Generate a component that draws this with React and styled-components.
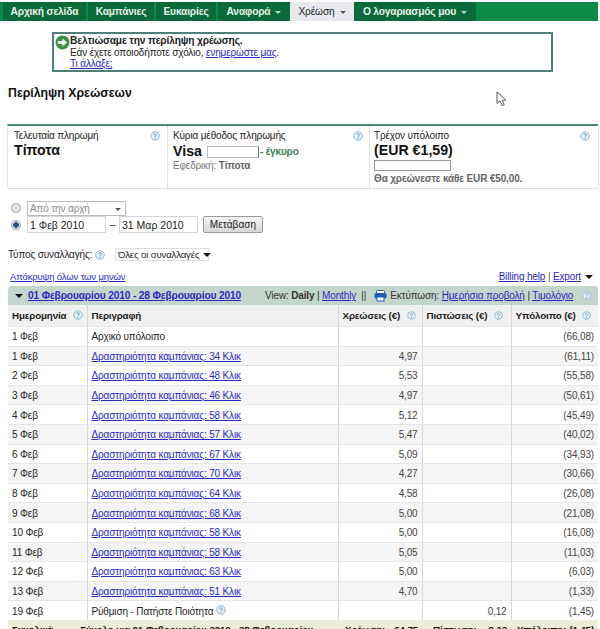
import React from 'react';
import styled, { createGlobalStyle } from 'styled-components';

const GlobalStyle = createGlobalStyle`
  html, body {
    margin: 0;
    height: 629px;
    overflow: hidden;
    background: #fff;
    font-family: "Liberation Sans", Arial, sans-serif;
    font-size: 10px;
    letter-spacing: -0.15px;
    color: #222;
  }
  a {
    color: #2a2ac0;
    text-decoration: underline;
  }
`;

const Page = styled.div`
  position: relative;
  width: 600px;
  height: 629px;
  overflow: hidden;
  padding-top: 2px;
  box-sizing: border-box;
`;

const Nav = styled.div`
  display: flex;
  height: 19px;
  width: 598px;
  background: #0b8b45;
  padding-left: 3px;
  box-sizing: border-box;
`;

const Tab = styled.div`
  width: ${({ $w }) => $w}px;
  margin-right: ${({ $gap }) => $gap ?? 2}px;
  display: flex;
  align-items: center;
  justify-content: center;
  gap: 5px;
  font-size: 10.2px;
  font-weight: ${({ $active }) => ($active ? 'normal' : 'bold')};
  background: ${({ $active }) => ($active ? '#e7e9ef' : '#0a6a39')};
  color: ${({ $active }) => ($active ? '#222' : '#e8f2ea')};
`;

const Caret = styled.span`
  width: 0;
  height: 0;
  margin-top: 2px;
  border-left: 3px solid transparent;
  border-right: 3px solid transparent;
  border-top: 3px solid ${({ $dark }) => ($dark ? '#555' : '#bcd8c6')};
`;

const Notice = styled.div`
  margin: 11px 0 0 52px;
  width: 501px;
  height: 40px;
  box-sizing: border-box;
  border: 2px solid #4f7f79;
  padding: 1px 0 0 1px;
  display: flex;
  line-height: 11.5px;
`;

const NoticeTitle = styled.div`
  font-weight: bold;
  font-size: 10.2px;
`;

const Heading = styled.h1`
  margin: 13px 0 0 8px;
  font-size: 12.3px;
  letter-spacing: 0;
  line-height: 16px;
  font-weight: bold;
  color: #111;
`;

const Summary = styled.div`
  display: grid;
  grid-template-columns: 160px 202px 229px;
  width: 591px;
  height: 65px;
  margin: 23px 0 0 7px;
  box-sizing: border-box;
  border-top: 2px solid #4f8a72;
  border-bottom: 1px solid #e2e2e2;
  border-left: 1px solid #e6e6e6;
`;

const SummaryCell = styled.div`
  position: relative;
  padding: 4px 0 0 ${({ $pad }) => $pad ?? 5}px;
  border-right: 1px solid #e2e2e2;
  line-height: 12px;
`;

const HelpCorner = styled.span`
  position: absolute;
  top: 5px;
  right: ${({ $right }) => $right ?? 7}px;
  display: flex;
`;

const BigValue = styled.div`
  font-size: 14.2px;
  letter-spacing: 0;
  font-weight: bold;
  color: #111;
  line-height: 15px;
  margin-top: 1px;
`;

const VisaRow = styled.div`
  display: flex;
  align-items: center;
  height: 15px;
  margin-top: 1px;
`;

const Masked = styled.span`
  width: 50px;
  height: 10px;
  margin: 3px 1px 0 5px;
  border: 1px solid #bbb;
  border-right-color: #777;
  background: #fff;
`;

const Valid = styled.span`
  color: #3d7f5c;
  font-weight: bold;
  margin-top: 3px;
`;

const Muted = styled.div`
  color: #777;
  margin-top: 2px;
  b {
    color: #666;
  }
`;

const BlankField = styled.div`
  width: 75px;
  height: 9px;
  border: 1px solid #999;
  margin-top: 2px;
`;

const FormRows = styled.div`
  margin: 11px 0 0 11px;
  display: flex;
  flex-direction: column;
`;

const FormRow = styled.div`
  display: flex;
  align-items: center;
  height: ${({ $h }) => $h}px;
`;

const Radio = styled.span`
  width: 8px;
  height: 8px;
  border-radius: 50%;
  border: 1px solid #aaa;
  margin-right: 6px;
  background: ${({ $on }) =>
    $on ? 'radial-gradient(circle, #2d4f7a 0 2.5px, #cfd8e2 3px)' : '#e4e4e4'};
`;

const DisabledSelect = styled.div`
  width: 91px;
  height: 13px;
  border: 1px solid #bbb;
  padding: 0 4px 0 2px;
  display: flex;
  align-items: center;
  justify-content: space-between;
  color: #888;
`;

const DateInput = styled.div`
  width: 75px;
  height: 15px;
  border: 1px solid #d4d4d4;
  padding-left: 2px;
  display: flex;
  align-items: center;
  font-size: 10.5px;
  letter-spacing: 0;
`;

const Dash = styled.span`
  width: 13px;
  text-align: center;
`;

const GoButton = styled.div`
  margin-left: 5px;
  width: 58px;
  height: 15px;
  border: 1px solid #999;
  border-radius: 2px;
  background: linear-gradient(#f4f4f4, #d8d8d8);
  display: flex;
  align-items: center;
  justify-content: center;
  letter-spacing: 0.1px;
`;

const TypeRow = styled.div`
  margin: 14px 0 0 8px;
  display: flex;
  align-items: center;
  height: 15px;
`;

const TypeSelect = styled.div`
  margin-left: 10px;
  width: 86px;
  height: 11px;
  border: 1px solid #ddd;
  padding: 0 4px 0 2px;
  display: flex;
  align-items: center;
  justify-content: space-between;
  font-size: 9.6px;
  white-space: nowrap;
`;

const LinksRow = styled.div`
  display: flex;
  justify-content: space-between;
  align-items: center;
  margin: 8px 0 0 10px;
  width: 583px;
  height: 12px;
  color: #555;
`;

const HideLink = styled.a`
  font-size: 9.5px;
`;

const BlackCaret = styled.span`
  display: inline-block;
  flex-shrink: 0;
  width: 0;
  height: 0;
  margin-left: 4px;
  vertical-align: 1px;
  border-left: 4px solid transparent;
  border-right: 4px solid transparent;
  border-top: 4px solid #111;
`;

const PeriodBar = styled.div`
  margin: 4px 0 0 8px;
  width: 590px;
  height: 19px;
  box-sizing: border-box;
  background: #c3d6cc;
  border-radius: 4px 4px 0 0;
  display: flex;
  align-items: center;
  padding-left: 3px;
  color: #333;
  white-space: nowrap;
`;

const PeriodLink = styled.a`
  font-weight: bold;
  font-size: 10.2px;
  margin-left: 5px;
  margin-right: 24px;
`;

const PrintLabel = styled.span`
  display: inline-flex;
  align-items: center;
  gap: 3px;
  margin-left: 8px;
`;

const Table = styled.table`
  width: 590px;
  margin-left: 8px;
  border-collapse: collapse;
  table-layout: fixed;

  th {
    height: 21px;
    padding: 0 0 0 4px;
    text-align: left;
    font-weight: bold;
    font-size: 9.8px;
    background: #f1f1f1;
    border-right: 1px solid #d8d8d8;
    white-space: nowrap;
  }
  th:last-child {
    border-right: 0;
  }
  th svg {
    margin-left: 4px;
    vertical-align: -1px;
  }
`;

const Row = styled.tr`
  height: 19.6px;
  background: ${({ $shade }) => ($shade ? '#f5f5f5' : '#fff')};

  td {
    padding: 1px 4px 0;
    border-right: 1px solid #d8d8d8;
    border-top: 1px solid #e6e6e6;
    white-space: nowrap;
  }
  td:last-child {
    border-right: 0;
  }
`;

const Num = styled.td`
  text-align: right;
  color: #444;
`;

const TotalRow = styled.tr`
  height: 18px;
  background: #eeeed8;
  font-weight: bold;
  color: #111;
  font-size: 9.8px;

  td {
    padding: 0 4px;
    white-space: nowrap;
  }
`;

const TotalHead = styled.div`
  display: flex;
  gap: 27px;
  padding-right: 0;
`;

const TotalFigures = styled.div`
  display: flex;
  justify-content: space-between;
  padding-left: ${({ $pad }) => $pad}px;
`;

const Cursor = styled.svg`
  position: absolute;
  left: 496px;
  top: 91px;
`;

const Help = ({ size = 10 }) => (
  <svg width={size} height={size} viewBox="0 0 10 10" style={{ flexShrink: 0 }}>
    <circle cx="5" cy="5" r="4.3" fill="#e4f0f6" stroke="#8fbcd4" strokeWidth="1" />
    <path d="M3.6 4C3.7 2.4 6.4 2.4 6.4 3.9 6.4 5 5 4.9 5 6" fill="none" stroke="#5f97b8" strokeWidth="0.9" />
    <circle cx="5" cy="7.4" r="0.6" fill="#5f97b8" />
  </svg>
);

const ArrowBadge = () => (
  <svg width="15" height="15" viewBox="0 0 15 15" style={{ flexShrink: 0 }}>
    <circle cx="7.5" cy="7.5" r="7" fill="#3f8f45" />
    <path d="M2.8 6h4.6V3.4L12.2 7.5 7.4 11.6V9H2.8z" fill="#eef3ea" />
  </svg>
);

const Printer = () => (
  <svg width="13" height="12" viewBox="0 0 13 12">
    <rect x="2.5" y="0.5" width="8" height="3.5" rx="1" fill="#fff" stroke="#1f5fb8" />
    <rect x="0.5" y="3" width="12" height="5.5" rx="1.5" fill="#1f5fb8" />
    <rect x="3" y="7" width="7" height="4" fill="#fff" stroke="#1f5fb8" />
  </svg>
);

const rows = [
  ['1 Φεβ', 34, '4,97', '(61,11)'],
  ['2 Φεβ', 48, '5,53', '(55,58)'],
  ['3 Φεβ', 46, '4,97', '(50,61)'],
  ['4 Φεβ', 58, '5,12', '(45,49)'],
  ['5 Φεβ', 57, '5,47', '(40,02)'],
  ['6 Φεβ', 67, '5,09', '(34,93)'],
  ['7 Φεβ', 70, '4,27', '(30,66)'],
  ['8 Φεβ', 64, '4,58', '(26,08)'],
  ['9 Φεβ', 68, '5,00', '(21,08)'],
  ['10 Φεβ', 58, '5,00', '(16,08)'],
  ['11 Φεβ', 58, '5,05', '(11,03)'],
  ['12 Φεβ', 63, '5,00', '(6,03)'],
  ['13 Φεβ', 51, '4,70', '(1,33)'],
];

export default function App() {
  return (
    <Page>
      <GlobalStyle />
      <Nav>
        <Tab $w={83}>Αρχική σελίδα</Tab>
        <Tab $w={66}>Καμπάνιες</Tab>
        <Tab $w={60}>Ευκαιρίες</Tab>
        <Tab $w={72} $gap={0}>Αναφορά <Caret /></Tab>
        <Tab $w={64} $gap={0} $active>Χρέωση <Caret $dark /></Tab>
        <Tab $w={122}>Ο λογαριασμός μου <Caret /></Tab>
      </Nav>

      <Notice>
        <ArrowBadge />
        <div>
          <NoticeTitle>Βελτιώσαμε την περίληψη χρέωσης.</NoticeTitle>
          <div>Εάν έχετε οποιοδήποτε σχόλιο, <a href="#a">ενημερώστε μας</a>.</div>
          <div><a href="#b">Τι άλλαξε;</a></div>
        </div>
      </Notice>

      <Heading>Περίληψη Χρεώσεων</Heading>

      <Summary>
        <SummaryCell $pad={6}>
          Τελευταία πληρωμή
          <HelpCorner><Help /></HelpCorner>
          <BigValue>Τίποτα</BigValue>
        </SummaryCell>
        <SummaryCell>
          Κύρια μέθοδος πληρωμής
          <HelpCorner $right={6}><Help /></HelpCorner>
          <VisaRow>
            <BigValue>Visa</BigValue>
            <Masked />
            <Valid>- έγκυρο</Valid>
          </VisaRow>
          <Muted>Εφεδρική: <b>Τίποτα</b></Muted>
        </SummaryCell>
        <SummaryCell $pad={4}>
          Τρέχον υπόλοιπο
          <HelpCorner $right={8}><Help /></HelpCorner>
          <BigValue>(EUR €1,59)</BigValue>
          <BlankField />
          <Muted><b>Θα χρεώνεστε κάθε EUR €50,00.</b></Muted>
        </SummaryCell>
      </Summary>

      <FormRows>
        <FormRow $h={16}>
          <Radio />
          <DisabledSelect>Από την αρχή <Caret $dark /></DisabledSelect>
        </FormRow>
        <FormRow $h={17}>
          <Radio $on />
          <DateInput>1 Φεβ 2010</DateInput>
          <Dash>–</Dash>
          <DateInput>31 Μαρ 2010</DateInput>
          <GoButton>Μετάβαση</GoButton>
        </FormRow>
      </FormRows>

      <TypeRow>
        Τύπος συναλλαγής:&nbsp;<Help />
        <TypeSelect>Όλες οι συναλλαγές <BlackCaret /></TypeSelect>
      </TypeRow>

      <LinksRow>
        <HideLink href="#c">Απόκρυψη όλων των μηνών</HideLink>
        <span>
          <a href="#d">Billing help</a> | <a href="#e">Export</a>
          <BlackCaret />
        </span>
      </LinksRow>

      <PeriodBar>
        <BlackCaret />
        <PeriodLink href="#f">01 Φεβρουαρίου 2010 - 28 Φεβρουαρίου 2010</PeriodLink>
        <span>View: <b>Daily</b> | <a href="#g">Monthly</a> &nbsp;||</span>
        <PrintLabel>
          <Printer />
          <span>Εκτύπωση: <a href="#h">Ημερήσια προβολή</a> | <a href="#i">Τιμολόγιο</a></span>
          &nbsp;<Help size={9} />
        </PrintLabel>
      </PeriodBar>

      <Table>
        <colgroup>
          <col width="79" />
          <col width="251" />
          <col width="84" />
          <col width="89" />
          <col width="87" />
        </colgroup>
        <thead>
          <tr>
            <th>Ημερομηνία <Help /></th>
            <th>Περιγραφή</th>
            <th>Χρεώσεις (€) <Help size={9} /></th>
            <th>Πιστώσεις (€) <Help size={9} /></th>
            <th>Υπόλοιπο (€) <Help size={9} /></th>
          </tr>
        </thead>
        <tbody>
          <Row>
            <td>1 Φεβ</td>
            <td>Αρχικό υπόλοιπο</td>
            <Num />
            <Num />
            <Num>(66,08)</Num>
          </Row>
          {rows.map(([date, clicks, charge, balance], i) => (
            <Row key={date + clicks} $shade={i % 2 === 0}>
              <td>{date}</td>
              <td><a href="#r">Δραστηριότητα καμπάνιας: {clicks} Κλικ</a></td>
              <Num>{charge}</Num>
              <Num />
              <Num>{balance}</Num>
            </Row>
          ))}
          <Row>
            <td>19 Φεβ</td>
            <td>Ρύθμιση - Πατήστε Ποιότητα <Help /></td>
            <Num />
            <Num>0,12</Num>
            <Num>(1,45)</Num>
          </Row>
          <TotalRow>
            <td colSpan="2">
              <TotalHead>
                <span>Συνολικά</span>
                <span>Σύνολο για 01 Φεβρουαρίου 2010 - 28 Φεβρουαρίου</span>
              </TotalHead>
            </td>
            <td><TotalFigures $pad={3}><span>Χρέωση:</span><span>64,75</span></TotalFigures></td>
            <td><TotalFigures $pad={7}><span>Πίστωση:</span><span>0,12</span></TotalFigures></td>
            <td><TotalFigures $pad={2}><span>Υπόλοιπο:</span><span>(1,45)</span></TotalFigures></td>
          </TotalRow>
        </tbody>
      </Table>

      <Cursor width="11" height="16" viewBox="0 0 11 16">
        <path d="M1 1v11.5l3-2.6 2.2 4.8 2-1-2.2-4.6h4z" fill="#fff" stroke="#444" strokeWidth="0.9" />
      </Cursor>
    </Page>
  );
}
